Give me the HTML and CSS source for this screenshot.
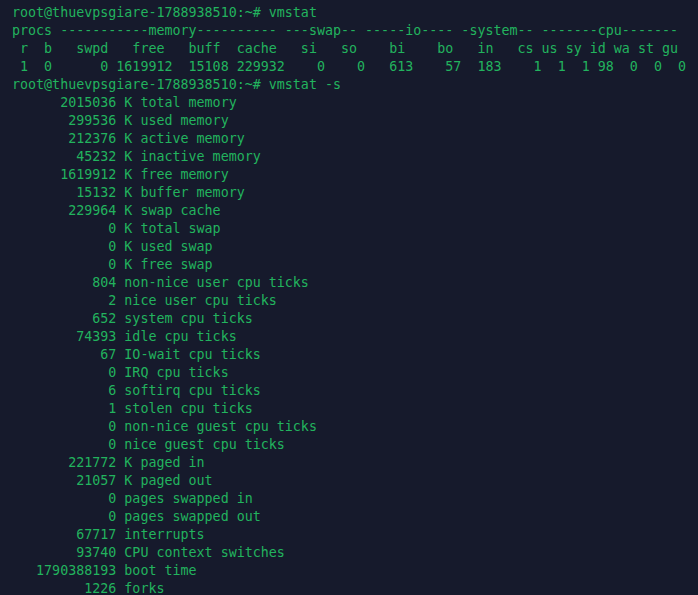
FILE: index.html
```html
<!DOCTYPE html>
<html>
<head>
<meta charset="utf-8">
<link rel="stylesheet" href="styles.css">
</head>
<body>
<pre class="term">root@thuevpsgiare-1788938510:~# vmstat
procs -----------memory---------- ---swap-- -----io---- -system-- -------cpu-------
 r  b   swpd   free   buff  cache   si   so    bi    bo   in   cs us sy id wa st gu
 1  0      0 1619912  15108 229932    0    0   613    57  183    1  1  1 98  0  0  0
root@thuevpsgiare-1788938510:~# vmstat -s
      2015036 K total memory
       299536 K used memory
       212376 K active memory
        45232 K inactive memory
      1619912 K free memory
        15132 K buffer memory
       229964 K swap cache
            0 K total swap
            0 K used swap
            0 K free swap
          804 non-nice user cpu ticks
            2 nice user cpu ticks
          652 system cpu ticks
        74393 idle cpu ticks
           67 IO-wait cpu ticks
            0 IRQ cpu ticks
            6 softirq cpu ticks
            1 stolen cpu ticks
            0 non-nice guest cpu ticks
            0 nice guest cpu ticks
       221772 K paged in
        21057 K paged out
            0 pages swapped in
            0 pages swapped out
        67717 interrupts
        93740 CPU context switches
   1790388193 boot time
         1226 forks
</pre>
</body>
</html>
```
FILE: styles.css
```css
html, body {
  margin: 0;
  padding: 0;
  background: #161a2c;
  height: 100%;
  overflow: hidden;
}
.term {
  margin: 0;
  padding: 4px 12px;
  font-family: "DejaVu Sans Mono", monospace;
  font-size: 13.33px;
  line-height: 18px;
  color: #22b35e;
  white-space: pre;
}
```
